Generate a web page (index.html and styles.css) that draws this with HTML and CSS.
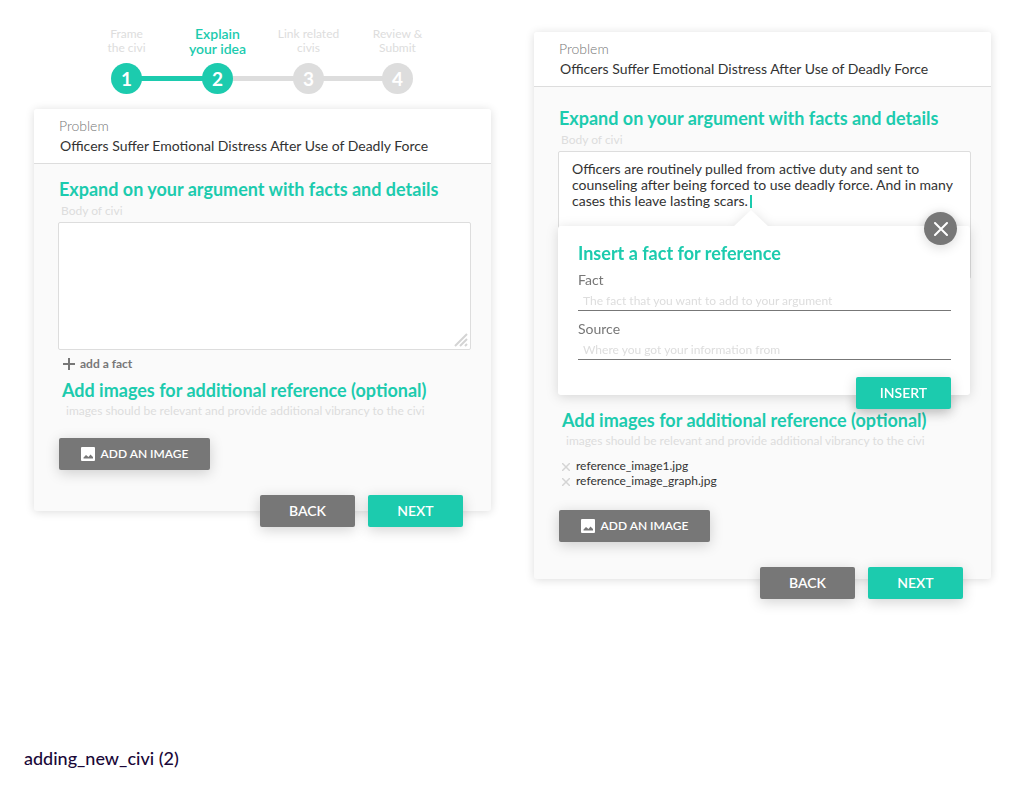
FILE: index.html
```html
<!DOCTYPE html>
<html lang="en">
<head>
<meta charset="utf-8">
<meta name="viewport" content="width=device-width, initial-scale=1">
<title>adding_new_civi (2)</title>
<link rel="stylesheet" href="styles.css">
</head>
<body>
<main class="board">
  <section class="column column-start">
    <ol class="steps">
      <li class="step done"><span class="step-label">Frame<br>the civi</span><span class="step-dot">1</span></li>
      <li class="step current"><span class="step-label">Explain<br>your idea</span><span class="step-dot">2</span></li>
      <li class="step"><span class="step-label">Link related<br>civis</span><span class="step-dot">3</span></li>
      <li class="step"><span class="step-label">Review &amp;<br>Submit</span><span class="step-dot">4</span></li>
    </ol>

    <form class="card">
      <header class="card-header">
        <p class="kind">Problem</p>
        <h1 class="title">Officers Suffer Emotional Distress After Use of Deadly Force</h1>
      </header>
      <div class="card-body">
        <h2 class="heading">Expand on your argument with facts and details</h2>
        <label class="hint" for="body-empty">Body of civi</label>
        <div class="editor">
          <textarea class="editor-text" id="body-empty"></textarea>
          <svg class="grip" viewBox="0 0 14 14" aria-hidden="true"><path d="M1 13 13 1M6 13l7-7M11 13l2-2"/></svg>
        </div>
        <button class="add-fact" type="button">
          <svg class="plus" viewBox="0 0 12 12" aria-hidden="true"><path d="M6 0v12M0 6h12"/></svg>add a fact
        </button>
        <h2 class="heading heading-images">Add images for additional reference (optional)</h2>
        <p class="hint hint-images">images should be relevant and provide additional vibrancy to the civi</p>
        <button class="button button-image" type="button">
          <svg class="picture" viewBox="0 0 14 14" aria-hidden="true"><path fill-rule="evenodd" d="M1 0h12a1 1 0 0 1 1 1v12a1 1 0 0 1-1 1H1a1 1 0 0 1-1-1V1a1 1 0 0 1 1-1ZM2.500 11.500h9.500V10L9.500 7.500 7.500 10 5 8 2.500 10.500Z"/></svg>ADD AN IMAGE
        </button>
      </div>
      <footer class="actions">
        <button class="button" type="button">BACK</button>
        <button class="button button-primary" type="button">NEXT</button>
      </footer>
    </form>
  </section>

  <section class="column">
    <form class="card card-filled">
      <header class="card-header">
        <p class="kind">Problem</p>
        <h1 class="title">Officers Suffer Emotional Distress After Use of Deadly Force</h1>
      </header>
      <div class="card-body">
        <h2 class="heading">Expand on your argument with facts and details</h2>
        <label class="hint" for="body-filled">Body of civi</label>
        <div class="editor">
          <textarea class="editor-text" id="body-filled">Officers are routinely pulled from active duty and sent to counseling after being forced to use deadly force. And in many cases this leave lasting scars.</textarea>
          <span class="caret"></span>
        </div>
        <section class="popup">
          <button class="close" type="button" aria-label="Close"><svg class="close-icon" viewBox="0 0 14 14" aria-hidden="true"><path d="M1 1l12 12M13 1 1 13"/></svg></button>
          <h2 class="heading">Insert a fact for reference</h2>
          <label class="field-label" for="fact">Fact</label>
          <input class="field" id="fact" type="text" placeholder="The fact that you want to add to your argument">
          <label class="field-label" for="source">Source</label>
          <input class="field" id="source" type="text" placeholder="Where you got your information from">
          <div class="popup-actions"><button class="button button-primary" type="button">INSERT</button></div>
        </section>
        <h2 class="heading heading-images">Add images for additional reference (optional)</h2>
        <p class="hint hint-images">images should be relevant and provide additional vibrancy to the civi</p>
        <ul class="files">
          <li class="file"><button class="remove" type="button" aria-label="Remove reference_image1.jpg"><svg class="remove-icon" viewBox="0 0 8 8" aria-hidden="true"><path d="M0 0l8 8M8 0 0 8"/></svg></button>reference_image1.jpg</li>
          <li class="file"><button class="remove" type="button" aria-label="Remove reference_image_graph.jpg"><svg class="remove-icon" viewBox="0 0 8 8" aria-hidden="true"><path d="M0 0l8 8M8 0 0 8"/></svg></button>reference_image_graph.jpg</li>
        </ul>
        <button class="button button-image" type="button">
          <svg class="picture" viewBox="0 0 14 14" aria-hidden="true"><path fill-rule="evenodd" d="M1 0h12a1 1 0 0 1 1 1v12a1 1 0 0 1-1 1H1a1 1 0 0 1-1-1V1a1 1 0 0 1 1-1ZM2.500 11.500h9.500V10L9.500 7.500 7.500 10 5 8 2.500 10.500Z"/></svg>ADD AN IMAGE
        </button>
      </div>
      <footer class="actions">
        <button class="button" type="button">BACK</button>
        <button class="button button-primary" type="button">NEXT</button>
      </footer>
    </form>
  </section>
</main>
<p class="caption">adding_new_civi (2)</p>
</body>
</html>
```

FILE: styles.css
```css
:root {
  --teal: #1ccbae;
  --gray: #777;
  --pale: #ddd;
  --ink: #333;
}

* {
  box-sizing: border-box;
  margin: 0;
  padding: 0;
}

body {
  display: flex;
  flex-direction: column;
  min-height: 100vh;
  background: #fff;
  color: var(--ink);
  font: 14px/20px Lato, sans-serif;
}

button,
input,
textarea {
  border: 0;
  background: none;
  color: inherit;
  font: inherit;
}

button {
  cursor: pointer;
}

.board {
  display: grid;
  grid-template-columns: 1fr 1fr;
  gap: 43px;
  align-items: start;
  padding: 27px 33px 0 34px;
}

.column {
  padding-top: 5px;
}

.column-start {
  padding-top: 0;
}

/* Progress steps */

.steps {
  display: grid;
  grid-template-columns: 91px 91px 91px 87px;
  margin: 0 0 15px 47px;
  list-style: none;
}

.step {
  position: relative;
  display: flex;
  flex-direction: column;
  align-items: center;
  gap: 8px;
  color: var(--pale);
  font-size: 12px;
  line-height: 14px;
  text-align: center;
}

.step-dot {
  z-index: 1;
  width: 31px;
  border-radius: 50%;
  background: var(--pale);
  color: #fff;
  font-size: 19px;
  font-weight: 700;
  line-height: 31px;
}

.step:not(:last-child)::after {
  content: "";
  position: absolute;
  bottom: 13px;
  left: 50%;
  width: 100%;
  height: 5px;
  background: var(--pale);
}

.step.done::after,
.done .step-dot,
.current .step-dot {
  background: var(--teal);
}

.current .step-label {
  margin: -1px 0;
  color: var(--teal);
  font-size: 14px;
  font-weight: 600;
  line-height: 15px;
}

/* Card */

.card {
  border-radius: 3px;
  background: #fafafa;
  box-shadow: 0 1px 10px rgba(0, 0, 0, 0.14);
}

.card-header {
  padding: 7px 25px;
  border-bottom: 1px solid var(--pale);
  border-radius: 3px 3px 0 0;
  background: #fff;
}

.kind {
  color: #777;
  font-size: 14px;
  font-weight: 300;
}

.title {
  padding-left: 1px;
  font-size: 14px;
  font-weight: 400;
}

.card-body {
  padding: 13px 20px 0 24px;
}

.card-filled .card-body {
  padding-top: 19px;
}

.heading {
  padding-left: 1px;
  color: var(--teal);
  font-size: 18px;
  font-weight: 700;
  line-height: 24px;
}

.heading-images {
  padding-left: 4px;
}

.hint {
  display: block;
  padding-left: 3px;
  color: var(--pale);
  font-size: 12px;
  line-height: 20px;
}

.hint-images {
  padding-left: 8px;
  line-height: 18px;
}

.editor {
  position: relative;
  margin-top: 1px;
}

.editor-text {
  display: block;
  width: 100%;
  height: 128px;
  padding: 9px 13px;
  border: 1px solid var(--pale);
  border-radius: 2px;
  background: #fff;
  line-height: 16px;
  resize: none;
}

.grip {
  position: absolute;
  right: 3px;
  bottom: 3px;
  width: 14px;
  height: 14px;
  fill: none;
  stroke: #d4d4d4;
  stroke-width: 2;
}

.caret {
  position: absolute;
  top: 44px;
  left: 192px;
  width: 2px;
  height: 13px;
  background: var(--teal);
}

.add-fact {
  display: flex;
  gap: 5px;
  align-items: center;
  padding: 5px;
  color: var(--gray);
  font-size: 12px;
  font-weight: 700;
  line-height: 18px;
}

.plus {
  width: 12px;
  height: 12px;
  stroke: var(--gray);
  stroke-width: 2;
}

/* Buttons */

.button {
  width: 95px;
  height: 32px;
  border-radius: 2px;
  background: var(--gray);
  box-shadow: 0 3px 14px rgba(0, 0, 0, 0.18);
  color: #fff;
  font-size: 14px;
  font-weight: 600;
}

.button-primary {
  background: var(--teal);
}

.button-image {
  display: flex;
  gap: 6px;
  align-items: center;
  justify-content: center;
  width: 151px;
  margin: 18px 0 25px 1px;
  font-size: 12px;
}

.picture {
  width: 14px;
  height: 14px;
  fill: #fff;
}

.actions {
  display: flex;
  gap: 13px;
  justify-content: flex-end;
  height: 16px;
  padding-right: 28px;
}

.card-filled .actions {
  height: 12px;
}

/* Fact popup */

.popup {
  position: relative;
  z-index: 1;
  margin: -53px 1px 13px 0;
  padding: 15px 19px 0 20px;
  border-radius: 3px;
  background: #fff;
  filter: drop-shadow(0 2px 6px rgba(0, 0, 0, 0.14));
}

.popup::before {
  content: "";
  position: absolute;
  top: -16px;
  left: 175px;
  width: 36px;
  height: 17px;
  background: #fff;
  clip-path: polygon(50% 0, 100% 100%, 0 100%);
}

.popup .heading {
  padding-left: 0;
}

.close {
  position: absolute;
  top: -14px;
  right: 13px;
  display: grid;
  place-items: center;
  width: 33px;
  height: 33px;
  border-radius: 50%;
  background: var(--gray);
  box-shadow: 0 3px 12px rgba(0, 0, 0, 0.14);
}

.close-icon {
  width: 14px;
  height: 14px;
  stroke: #fff;
  stroke-width: 2;
  stroke-linecap: round;
}

.field-label {
  display: block;
  padding-top: 4px;
  color: var(--gray);
  line-height: 22px;
}

.field {
  display: block;
  width: 100%;
  height: 20px;
  margin-bottom: 3px;
  padding: 0 5px;
  border-bottom: 1px solid var(--gray);
  font-size: 12px;
}

.field::placeholder {
  color: var(--pale);
}

.popup-actions {
  display: flex;
  justify-content: flex-end;
  height: 32px;
  padding-top: 14px;
}

/* Attached files */

.files {
  padding: 8px 0 4px 4px;
  list-style: none;
}

.file {
  display: flex;
  gap: 6px;
  align-items: center;
  font-size: 12px;
  line-height: 15px;
}

.remove {
  display: flex;
  padding-top: 2px;
}

.remove-icon {
  width: 8px;
  height: 8px;
  stroke: #d4d4d4;
  stroke-width: 1.5;
}

.caption {
  margin-top: auto;
  padding: 40px 24px 32px;
  color: #1a0838;
  font-size: 18px;
  font-weight: 500;
}
```
